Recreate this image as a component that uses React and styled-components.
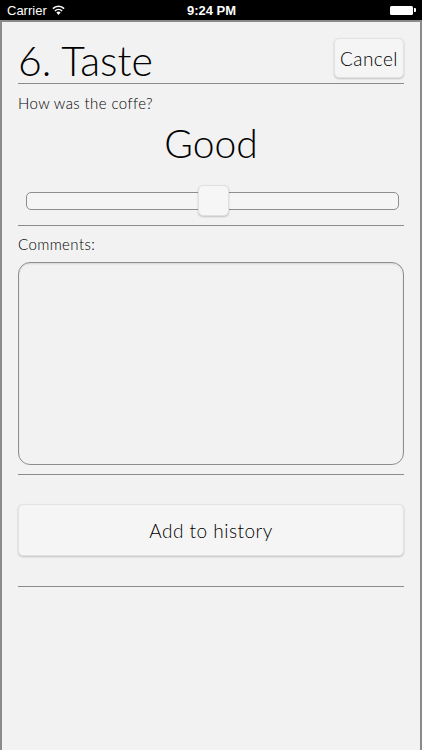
import React from 'react';
import styled, { createGlobalStyle } from 'styled-components';

const Global = createGlobalStyle`
  html, body {
    margin: 0;
    padding: 0;
    background: #f2f2f2;
  }
  * { box-sizing: border-box; }
`;

const Screen = styled.div`
  width: 422px;
  height: 750px;
  display: flex;
  flex-direction: column;
  font-family: Lato, "Open Sans", sans-serif;
  overflow: hidden;
`;

const StatusBar = styled.div`
  height: 20px;
  background: #000;
  color: #fff;
  display: grid;
  grid-template-columns: 1fr auto 1fr;
  align-items: center;
  padding: 0 6px 0 7px;
  font-family: "Liberation Sans", Arial, sans-serif;
  font-size: 13px;
`;

const Carrier = styled.div`
  display: flex;
  align-items: center;
  gap: 5px;
`;

const Clock = styled.div`
  font-weight: bold;
`;

const Battery = styled.div`
  justify-self: end;
  display: flex;
  align-items: center;
`;

const BatteryBody = styled.div`
  width: 23px;
  height: 9px;
  background: #fff;
  border-radius: 1.5px;
`;

const BatteryTip = styled.div`
  width: 2px;
  height: 4px;
  background: #fff;
  margin-left: 1px;
  border-radius: 0 1px 1px 0;
`;

const Body = styled.div`
  flex: 1;
  background: #f2f2f2;
  border: 2px solid #8a8a8a;
  border-bottom: none;
  padding: 0 16px;
  display: flex;
  flex-direction: column;
`;

const Header = styled.div`
  display: flex;
  justify-content: space-between;
  align-items: flex-end;
  height: 62px;
  border-bottom: 1px solid #8c8c8c;
  padding-bottom: 2px;
`;

const Title = styled.h1`
  margin: 0;
  font-weight: 300;
  font-size: 41px;
  line-height: 1;
  color: #000;
`;

const SmallButton = styled.button`
  font-family: inherit;
  font-weight: 300;
  font-size: 19px;
  color: #000;
  background: #f5f5f5;
  border: 1px solid #e2e2e2;
  border-radius: 5px;
  box-shadow: 0 1px 2px rgba(0, 0, 0, 0.2);
  width: 70px;
  height: 40px;
  padding: 0;
  margin-bottom: 3px;
  letter-spacing: 0.4px;
`;

const Label = styled.div`
  font-size: 15px;
  font-weight: 300;
  color: #000;
  margin-top: ${p => p.$top || 8}px;
  letter-spacing: 0.4px;
`;

const Rating = styled.div`
  text-align: center;
  font-size: 39px;
  font-weight: 300;
  color: #000;
  margin-top: 12px;
  line-height: 1;
`;

const SliderRow = styled.div`
  position: relative;
  margin: 22px 5px 0 8px;
  height: 31px;
  display: flex;
  align-items: center;
`;

const Track = styled.div`
  width: 100%;
  height: 18px;
  border: 1px solid #8e8e8e;
  border-radius: 5px;
  background: #f5f5f5;
`;

const Thumb = styled.div`
  position: absolute;
  top: 0;
  width: 31px;
  height: 31px;
  border-radius: 5px;
  background: #f6f6f6;
  border: 1px solid #e0e0e0;
  box-shadow: 0 1px 2px rgba(0, 0, 0, 0.2);
`;

const Divider = styled.div`
  height: 1px;
  background: #8c8c8c;
  margin-top: ${p => p.$top}px;
`;

const Comments = styled.textarea`
  margin-top: 9px;
  height: 203px;
  width: 100%;
  border: 1px solid #8e8e8e;
  border-radius: 12px;
  background: #f2f2f2;
  box-shadow: inset 0 1px 2px rgba(0, 0, 0, 0.12);
  resize: none;
  outline: none;
  font-family: inherit;
  font-size: 15px;
  padding: 8px;
`;

const WideButton = styled.button`
  margin-top: 29px;
  height: 52px;
  width: 100%;
  font-family: inherit;
  font-size: 19px;
  font-weight: 300;
  color: #000;
  background: #f5f5f5;
  border: 1px solid #e2e2e2;
  border-radius: 5px;
  box-shadow: 0 1px 2px rgba(0, 0, 0, 0.2);
  letter-spacing: 0.5px;
`;

const Wifi = () => (
  <svg width="13" height="10" viewBox="0 0 13 10">
    <path d="M6.5 10 L4.4 7.6 A3 3 0 0 1 8.6 7.6 Z" fill="#fff" />
    <path d="M2.9 6 A5.2 5.2 0 0 1 10.1 6" stroke="#fff" strokeWidth="1.6" fill="none" />
    <path d="M0.9 3.6 A8 8 0 0 1 12.1 3.6" stroke="#fff" strokeWidth="1.6" fill="none" />
  </svg>
);

export default function App() {
  const value = 0.5;
  return (
    <Screen>
      <Global />
      <StatusBar>
        <Carrier>Carrier <Wifi /></Carrier>
        <Clock>9:24 PM</Clock>
        <Battery>
          <BatteryBody />
          <BatteryTip />
        </Battery>
      </StatusBar>
      <Body>
        <Header>
          <Title>6. Taste</Title>
          <SmallButton>Cancel</SmallButton>
        </Header>
        <Label $top={10}>How was the coffe?</Label>
        <Rating>Good</Rating>
        <SliderRow>
          <Track />
          <Thumb style={{ left: `calc(${value * 100}% - 15px)` }} />
        </SliderRow>
        <Divider $top={9} />
        <Label $top={9}>Comments:</Label>
        <Comments />
        <Divider $top={9} />
        <WideButton>Add to history</WideButton>
        <Divider $top={30} />
      </Body>
    </Screen>
  );
}
